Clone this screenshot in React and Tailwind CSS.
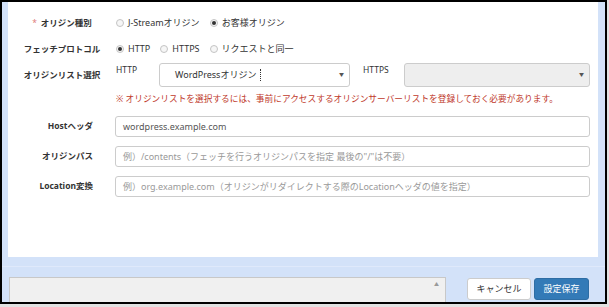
import React from 'react';

const font = { fontFamily: '"Noto Sans", "Noto Sans CJK JP", sans-serif' };

function Radio({ checked, label }) {
  return (
    <label className="flex items-center gap-[4px] mr-[10px]">
      <span className="w-[8px] h-[8px] rounded-full border border-[#c4c4c4] bg-[#f6f6f6] flex items-center justify-center">
        {checked && <span className="w-[4px] h-[4px] rounded-full bg-[#333]" />}
      </span>
      <span>{label}</span>
    </label>
  );
}

function Caret({ className = '' }) {
  return <span className={`text-[5px] text-[#555] ${className}`}>▼</span>;
}

function TextRow({ label, value, placeholder }) {
  return (
    <div className="flex items-center h-[21px]">
      <div className="w-[85px] text-right font-bold text-[8.5px] text-[#333]">{label}</div>
      <div className="ml-[22px] w-[475px] h-[21px] border border-[#ccc] rounded-[3px] bg-white flex items-center px-[7px]">
        {value ? (
          <span className="text-[#555]">{value}</span>
        ) : (
          <span className="text-[#999]">{placeholder}</span>
        )}
      </div>
    </div>
  );
}

export default function App() {
  return (
    <div className="w-[609px] h-[307px] bg-[#e2e2e2]" style={font}>
      <div className="w-[607px] h-[304px] border-2 border-black bg-[#d3e2f9] flex flex-col text-[9px] text-[#333]">
        {/* main white panel */}
        <div className="ml-[6px] w-[590px] h-[255px] bg-white flex flex-col">
          {/* origin type */}
          <div className="flex items-center mt-[14px] h-[14px]">
            <div className="ml-[12px] w-[84px] text-center font-bold text-[8.5px]">
              <span className="text-[#e07a78] font-normal mr-[4px]">*</span>オリジン種別
            </div>
            <div className="ml-[12px] flex items-center">
              <Radio label="J-Streamオリジン" />
              <Radio checked label="お客様オリジン" />
            </div>
          </div>

          {/* fetch protocol */}
          <div className="flex items-center mt-[12px] h-[14px]">
            <div className="ml-[12px] w-[84px] text-center font-bold text-[8.5px]">フェッチプロトコル</div>
            <div className="ml-[12px] flex items-center">
              <Radio checked label="HTTP" />
              <Radio label="HTTPS" />
              <Radio label="リクエストと同一" />
            </div>
          </div>

          {/* origin list */}
          <div className="flex items-center mt-[7px] h-[24px]">
            <div className="ml-[12px] w-[84px] text-center font-bold text-[8.5px]">オリジンリスト選択</div>
            <div className="ml-[12px] w-[43px] self-start mt-[1px] text-[8.5px]">HTTP</div>
            <div className="w-[191px] h-[24px] border border-[#ccc] rounded-[3px] flex items-center pl-[15px] pr-[5px]">
              <span className="text-[#333]">WordPressオリジン</span>
              <span className="ml-[4px] h-[12px] border-l border-dotted border-[#333]" />
              <Caret className="ml-auto" />
            </div>
            <div className="ml-[13px] w-[41px] self-start mt-[1px] text-[8.5px]">HTTPS</div>
            <div className="w-[186px] h-[24px] border border-[#ccc] rounded-[3px] bg-[#eee] flex items-center justify-end pr-[5px]">
              <Caret />
            </div>
          </div>

          {/* note */}
          <div className="mt-[6px] ml-[108px] h-[14px] flex items-center text-[#c0392b] text-[8.7px]">
            ※ オリジンリストを選択するには、事前にアクセスするオリジンサーバーリストを登録しておく必要があります。
          </div>

          <div className="mt-[9px] flex flex-col gap-[9px]">
            <TextRow label="Hostヘッダ" value="wordpress.example.com" />
            <TextRow label="オリジンパス" placeholder={'例）/contents（フェッチを行うオリジンパスを指定 最後の"/"は不要）'} />
            <TextRow label="Location変換" placeholder="例）org.example.com（オリジンがリダイレクトする際のLocationヘッダの値を指定）" />
          </div>
        </div>

        {/* footer */}
        <div className="h-[10px] border-b border-[#dfe9fb]" />
        <div className="flex-1 flex items-start pt-[10px] pr-[16px]">
          <div className="ml-[7px] w-[437px] h-full border-t border-l border-r border-[#c8c8c8] bg-[#f0f0f0] relative">
            <span className="absolute right-[6px] top-[3px] text-[5px] text-[#999]">▲</span>
          </div>
          <button className="ml-auto mt-[1px] w-[64px] h-[22px] bg-white border border-[#ccc] rounded-[3px] text-[9px] text-[#333]">
            キャンセル
          </button>
          <button className="ml-[3px] mt-[1px] w-[55px] h-[22px] bg-[#337ab7] border border-[#2e6da4] rounded-[3px] text-[9px] text-white">
            設定保存
          </button>
        </div>
      </div>
    </div>
  );
}
